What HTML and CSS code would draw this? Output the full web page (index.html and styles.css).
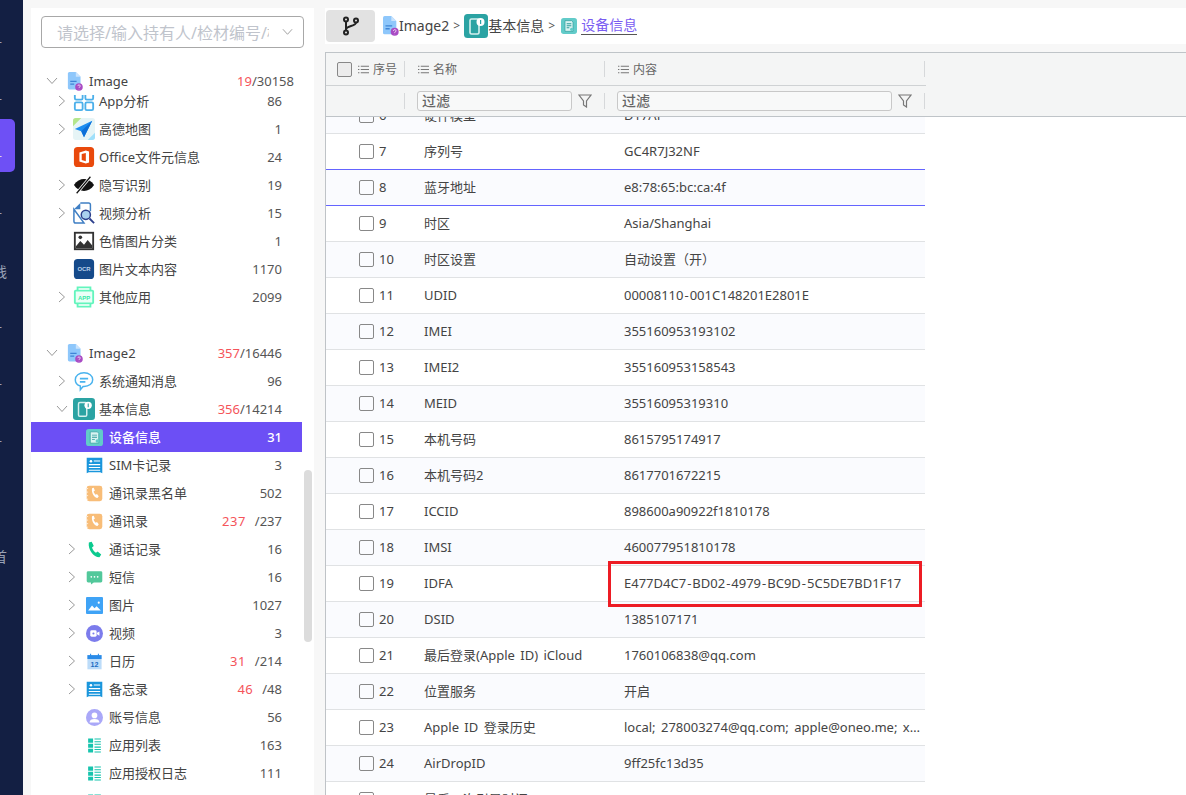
FILE: index.html
```html
<!DOCTYPE html>
<html lang="zh-CN">
<head>
  <meta charset="UTF-8">
  <title>设备信息</title>
  <link rel="stylesheet" href="styles.css">
</head>
<body>

  <!-- Icon set -->
  <svg class="icon-defs" width="0" height="0">
    <symbol id="i-doc" viewBox="0 0 20 24">
      <path d="M1 2a2 2 0 0 1 2-2h8l6 6v14a2 2 0 0 1-2 2H3a2 2 0 0 1-2-2z" fill="#8ec7fb"/>
      <path d="M11 0l6 6h-6z" fill="#c9e3fd"/>
      <path d="M4 11h8v1.6H4zM4 14.500h5v1.600H4z" fill="#3f85d6"/>
      <circle cx="15" cy="19" r="4.800" fill="#a94bc4"/>
      <path d="M13.600 17.800a1.500 1.500 0 1 1 2 1.400l-.6.5v.6M15 21.500v.3" fill="none" stroke="#fff" stroke-width=".9"/>
    </symbol>
    <symbol id="i-app" viewBox="0 0 24 24">
      <g fill="none" stroke="#4cb0ea" stroke-width="2">
        <rect x="2" y="2" width="8.500" height="8.500" rx="1.500"/>
        <rect x="13.500" y="2" width="8.500" height="8.500" rx="1.500"/>
        <rect x="2" y="13.500" width="8.500" height="8.500" rx="1.500"/>
        <rect x="13.500" y="13.500" width="8.500" height="8.500" rx="1.500"/>
      </g>
    </symbol>
    <symbol id="i-amap" viewBox="0 0 24 24">
      <rect width="24" height="24" rx="3" fill="#e6f4f6"/>
      <path d="M0 3a3 3 0 0 1 3-3h6L0 9z" fill="#b4e68c"/>
      <path d="M24 16v5a3 3 0 0 1-3 3h-5z" fill="#9fe0fb"/>
      <path d="M21 3L2 12l7 2.500L12 21z" fill="#1c8df0"/>
      <path d="M21 3L9 14.500 12 21z" fill="#0c6fd8"/>
    </symbol>
    <symbol id="i-office" viewBox="0 0 24 24">
      <rect x="1" y="1" width="22" height="22" rx="4" fill="#e9490c"/>
      <path d="M14 5l-7 2.200v9.600L14 19l3.500-1V6z" fill="#fff"/>
      <path d="M14 7.500l-4.500 1.200v6.600L14 16.500z" fill="#e9490c"/>
    </symbol>
    <symbol id="i-eye" viewBox="0 0 24 24">
      <path d="M1 12c3-4.500 7-6.500 11-6.500S20 7.500 23 12c-3 4.500-7 6.500-11 6.500S4 16.500 1 12z" fill="#111"/>
      <path d="M4 21L19 3" stroke="#fff" stroke-width="3"/>
      <path d="M4 21L19 3" stroke="#111" stroke-width="1.300"/>
    </symbol>
    <symbol id="i-video-file" viewBox="0 0 24 24">
      <path d="M8 1h9a2 2 0 0 1 2 2v7M12 23H3a2 2 0 0 1-2-2V8z" fill="none" stroke="#3f7fc4" stroke-width="1.600"/>
      <path d="M8 1L1 8h7z" fill="#3f7fc4"/>
      <circle cx="14" cy="14" r="5" fill="#a9d0ef" stroke="#2c3f8c" stroke-width="1.600"/>
      <path d="M18 18l5 5" stroke="#2c3f8c" stroke-width="2"/>
    </symbol>
    <symbol id="i-picture" viewBox="0 0 24 24">
      <rect x="2" y="3" width="20" height="18" fill="#fff" stroke="#333" stroke-width="2"/>
      <path d="M3 18l5-6 4 4 4-5 5 6v3H3z" fill="#333"/>
      <circle cx="8" cy="8" r="2" fill="#333"/>
    </symbol>
    <symbol id="i-ocr" viewBox="0 0 24 24">
      <rect x="1" y="1" width="22" height="22" rx="4" fill="#154a8a"/>
      <text x="12" y="14.500" text-anchor="middle" class="icon-text" fill="#b9d0ea">OCR</text>
    </symbol>
    <symbol id="i-otherapp" viewBox="0 0 24 24">
      <path d="M5 5V1.500h14V5M5 19v3.500h14V19" fill="none" stroke="#62f5bd" stroke-width="2"/>
      <rect x="2" y="5" width="20" height="14" rx="1" fill="#eafff7" stroke="#62f5bd" stroke-width="2"/>
      <text x="12" y="15" text-anchor="middle" class="icon-text" fill="#36e8a6">APP</text>
    </symbol>
    <symbol id="i-notice" viewBox="0 0 24 24">
      <path d="M12 3c5.500 0 9.500 3.300 9.500 7.500S17.500 18 12 18h-1l-3 3.500V17.500c-3.300-1-5.500-3.700-5.500-7C2.500 6.300 6.500 3 12 3z" fill="#fff" stroke="#49b3ee" stroke-width="1.600"/>
      <path d="M7.500 8.500h9v1.800h-9zM7.500 12h6v1.800h-6z" fill="#49b3ee"/>
    </symbol>
    <symbol id="i-basic" viewBox="0 0 24 24">
      <rect width="24" height="24" rx="3.500" fill="#2ba3a3"/>
      <rect x="6" y="5" width="9" height="15" rx="1.500" fill="none" stroke="#d5f0ee" stroke-width="1.600"/>
      <circle cx="16.500" cy="8" r="4" fill="#fff"/>
      <path d="M16 6h1.200v4H16z" fill="#2ba3a3"/>
    </symbol>
    <symbol id="i-device" viewBox="0 0 24 24">
      <rect width="24" height="24" rx="4" fill="#62cbc9"/>
      <path d="M6 4h10l2 2v14H6z" fill="#d8f3f2" stroke="#2f9c9c" stroke-width="1"/>
      <path d="M8.500 8h7v1.200h-7zM8.500 11h7v1.200h-7zM8.500 14h4v1.200h-4z" fill="#2f9c9c"/>
      <circle cx="16" cy="17" r="2.500" fill="#62cbc9"/>
    </symbol>
    <symbol id="i-sim" viewBox="0 0 24 24">
      <path d="M1 1h22v22l-3-1.500H4L1 23z" fill="#1a96dc"/>
      <circle cx="7" cy="6" r="1.800" fill="#fff"/>
      <path d="M11 5h9v1.500h-9zM4 10h16v1.500H4zM4 14h16v1.500H4zM4 18h16v1.500H4z" fill="#fff"/>
    </symbol>
    <symbol id="i-contact" viewBox="0 0 24 24">
      <rect x="1" y="1" width="22" height="22" rx="3.500" fill="#f8bd78"/>
      <path d="M1 5h2M1 10h2M1 15h2M1 20h2" stroke="#fff" stroke-width="1"/>
      <path d="M8.500 4.500l2.500-.5 1.500 4-1.800 1.200c.5 2 1.600 3.500 3 4.600l1.800-1 2.500 3.200-1.800 2.200c-4.800-.3-8.800-7-7.700-13.700z" fill="#fff"/>
    </symbol>
    <symbol id="i-phone" viewBox="0 0 24 24">
      <path d="M4 2l4-1 3 6-2.500 2c.8 3.200 2.800 5.800 5.500 7.500l2.500-1.800 5 4.500-2.500 3.800C10.500 23 2.500 12 4 2z" fill="#0cca8f"/>
    </symbol>
    <symbol id="i-sms" viewBox="0 0 24 24">
      <path d="M1 5a2 2 0 0 1 2-2h18a2 2 0 0 1 2 2v12a2 2 0 0 1-2 2H11l-4 3v-3H3a2 2 0 0 1-2-2z" fill="#52c89b"/>
      <circle cx="7.500" cy="11" r="1.200" fill="#fff"/>
      <circle cx="12" cy="11" r="1.200" fill="#fff"/>
      <circle cx="16.500" cy="11" r="1.200" fill="#fff"/>
    </symbol>
    <symbol id="i-photo" viewBox="0 0 24 24">
      <rect width="24" height="24" rx="1.500" fill="#3fa3f6"/>
      <path d="M3 19l5.500-7 3.500 4 3-3 6 6z" fill="#fff"/>
      <circle cx="18" cy="8" r="1.500" fill="#fff"/>
    </symbol>
    <symbol id="i-video" viewBox="0 0 24 24">
      <circle cx="12" cy="12" r="12" fill="#7c7cec"/>
      <rect x="6" y="7.500" width="9" height="9" rx="2" fill="#fff"/>
      <path d="M15.500 11l3.500-2v6l-3.500-2z" fill="#fff"/>
      <circle cx="10.500" cy="12" r="1.500" fill="#7c7cec"/>
    </symbol>
    <symbol id="i-calendar" viewBox="0 0 24 24">
      <rect x="2" y="3" width="20" height="20" fill="#bcdcf9"/>
      <rect x="2" y="3" width="20" height="5.500" fill="#2a8be8"/>
      <path d="M6.500 1v4M17.500 1v4" stroke="#2a8be8" stroke-width="1.500"/>
      <text x="12" y="20" text-anchor="middle" class="icon-day" fill="#1b6cc2">12</text>
    </symbol>
    <symbol id="i-user" viewBox="0 0 24 24">
      <circle cx="12" cy="12" r="12" fill="#aaa8f8"/>
      <circle cx="12" cy="9" r="4" fill="#fff"/>
      <path d="M5 19c0-3.500 3-5 7-5s7 1.500 7 5z" fill="#fff"/>
    </symbol>
    <symbol id="i-list" viewBox="0 0 24 24">
      <path d="M3 2h7v6H3zM3 9.500h7v5.500H3zM3 16.500h7V22H3z" fill="#17c4ad"/>
      <path d="M12 2h9v1.500h-9zM12 6h9v1.500h-9zM12 9.500h9V11h-9zM12 13.500h9V15h-9zM12 17h9v1.500h-9zM12 20.500h9V22h-9z" fill="#17c4ad"/>
    </symbol>
    <symbol id="i-lines" viewBox="0 0 12 12">
      <path d="M0 2h1.500v1H0zM3 2h9v1H3zM0 5.500h1.500v1H0zM3 5.500h9v1H3zM0 9h1.500v1H0zM3 9h9v1H3z" fill="#777"/>
    </symbol>
    <symbol id="i-filter" viewBox="0 0 14 14">
      <path d="M1 1h12L8.500 7v6l-3-2V7z" fill="none" stroke="#777" stroke-width="1.200"/>
    </symbol>
    <symbol id="i-right" viewBox="0 0 8 12">
      <path d="M1 1l5.500 5L1 11" fill="none" stroke="#999" stroke-width="1"/>
    </symbol>
    <symbol id="i-down" viewBox="0 0 12 8">
      <path d="M1 1l5 5.500L11 1" fill="none" stroke="#999" stroke-width="1"/>
    </symbol>
  </svg>

  <!-- Left rail, labels run off the edge of the window -->
  <nav class="rail">
    <div class="rail-item"><span>计</span></div>
    <div class="rail-item"><span>计</span></div>
    <div class="rail-item active"><span>计</span></div>
    <div class="rail-item"><span>计</span></div>
    <div class="rail-item far"><span>线</span></div>
    <div class="rail-item"><span>计</span></div>
    <div class="rail-item"><span>计</span></div>
    <div class="rail-item"><span>计</span></div>
    <div class="rail-item"></div>
    <div class="rail-item far"><span>首</span></div>
  </nav>

  <!-- Case tree -->
  <aside class="panel">
    <div class="owner-select">
      <span class="owner-text">请选择/输入持有人/检材编号/检材名称</span>
      <svg class="owner-arrow"><use href="#i-down"/></svg>
    </div>

    <div class="tree">
      <div class="row root sticky">
        <svg class="caret"><use href="#i-down"/></svg>
        <span class="icon-box"><svg class="ico-root"><use href="#i-doc"/></svg></span>
        <span class="label">Image</span>
        <span class="count"><b>19</b>/30158</span>
      </div>
      <div class="row l1">
        <svg class="caret"><use href="#i-right"/></svg>
        <span class="icon-box"><svg class="ico-lg"><use href="#i-app"/></svg></span>
        <span class="label">App分析</span><span class="count">86</span>
      </div>
      <div class="row l1">
        <svg class="caret"><use href="#i-right"/></svg>
        <span class="icon-box"><svg class="ico-lg"><use href="#i-amap"/></svg></span>
        <span class="label">高德地图</span><span class="count">1</span>
      </div>
      <div class="row l1">
        <span class="caret"></span>
        <span class="icon-box"><svg class="ico-lg"><use href="#i-office"/></svg></span>
        <span class="label">Office文件元信息</span><span class="count">24</span>
      </div>
      <div class="row l1">
        <svg class="caret"><use href="#i-right"/></svg>
        <span class="icon-box"><svg class="ico-lg"><use href="#i-eye"/></svg></span>
        <span class="label">隐写识别</span><span class="count">19</span>
      </div>
      <div class="row l1">
        <svg class="caret"><use href="#i-right"/></svg>
        <span class="icon-box"><svg class="ico-lg"><use href="#i-video-file"/></svg></span>
        <span class="label">视频分析</span><span class="count">15</span>
      </div>
      <div class="row l1">
        <span class="caret"></span>
        <span class="icon-box"><svg class="ico-lg"><use href="#i-picture"/></svg></span>
        <span class="label">色情图片分类</span><span class="count">1</span>
      </div>
      <div class="row l1">
        <span class="caret"></span>
        <span class="icon-box"><svg class="ico-lg"><use href="#i-ocr"/></svg></span>
        <span class="label">图片文本内容</span><span class="count">1170</span>
      </div>
      <div class="row l1">
        <svg class="caret"><use href="#i-right"/></svg>
        <span class="icon-box"><svg class="ico-lg"><use href="#i-otherapp"/></svg></span>
        <span class="label">其他应用</span><span class="count">2099</span>
      </div>

      <div class="row root second">
        <svg class="caret"><use href="#i-down"/></svg>
        <span class="icon-box"><svg class="ico-root"><use href="#i-doc"/></svg></span>
        <span class="label">Image2</span>
        <span class="count"><b>357</b>/16446</span>
      </div>
      <div class="row l1">
        <svg class="caret"><use href="#i-right"/></svg>
        <span class="icon-box"><svg class="ico-lg"><use href="#i-notice"/></svg></span>
        <span class="label">系统通知消息</span><span class="count">96</span>
      </div>
      <div class="row l1">
        <svg class="caret"><use href="#i-down"/></svg>
        <span class="icon-box"><svg class="ico-lg"><use href="#i-basic"/></svg></span>
        <span class="label">基本信息</span>
        <span class="count"><b>356</b>/14214</span>
      </div>
      <div class="row l2 active">
        <span class="caret"></span>
        <span class="icon-box"><svg class="ico-sm"><use href="#i-device"/></svg></span>
        <span class="label">设备信息</span><span class="count">31</span>
      </div>
      <div class="row l2">
        <span class="caret"></span>
        <span class="icon-box"><svg class="ico-sm"><use href="#i-sim"/></svg></span>
        <span class="label">SIM卡记录</span><span class="count">3</span>
      </div>
      <div class="row l2">
        <span class="caret"></span>
        <span class="icon-box"><svg class="ico-sm"><use href="#i-contact"/></svg></span>
        <span class="label">通讯录黑名单</span><span class="count">502</span>
      </div>
      <div class="row l2">
        <span class="caret"></span>
        <span class="icon-box"><svg class="ico-sm"><use href="#i-contact"/></svg></span>
        <span class="label">通讯录</span>
        <span class="count"><b class="gap">237</b>/237</span>
      </div>
      <div class="row l2">
        <svg class="caret"><use href="#i-right"/></svg>
        <span class="icon-box"><svg class="ico-sm"><use href="#i-phone"/></svg></span>
        <span class="label">通话记录</span><span class="count">16</span>
      </div>
      <div class="row l2">
        <svg class="caret"><use href="#i-right"/></svg>
        <span class="icon-box"><svg class="ico-sm"><use href="#i-sms"/></svg></span>
        <span class="label">短信</span><span class="count">16</span>
      </div>
      <div class="row l2">
        <svg class="caret"><use href="#i-right"/></svg>
        <span class="icon-box"><svg class="ico-sm"><use href="#i-photo"/></svg></span>
        <span class="label">图片</span><span class="count">1027</span>
      </div>
      <div class="row l2">
        <svg class="caret"><use href="#i-right"/></svg>
        <span class="icon-box"><svg class="ico-sm"><use href="#i-video"/></svg></span>
        <span class="label">视频</span><span class="count">3</span>
      </div>
      <div class="row l2">
        <svg class="caret"><use href="#i-right"/></svg>
        <span class="icon-box"><svg class="ico-sm"><use href="#i-calendar"/></svg></span>
        <span class="label">日历</span>
        <span class="count"><b class="gap">31</b>/214</span>
      </div>
      <div class="row l2">
        <svg class="caret"><use href="#i-right"/></svg>
        <span class="icon-box"><svg class="ico-sm"><use href="#i-sim"/></svg></span>
        <span class="label">备忘录</span>
        <span class="count"><b class="gap">46</b>/48</span>
      </div>
      <div class="row l2">
        <span class="caret"></span>
        <span class="icon-box"><svg class="ico-sm"><use href="#i-user"/></svg></span>
        <span class="label">账号信息</span><span class="count">56</span>
      </div>
      <div class="row l2">
        <span class="caret"></span>
        <span class="icon-box"><svg class="ico-sm"><use href="#i-list"/></svg></span>
        <span class="label">应用列表</span><span class="count">163</span>
      </div>
      <div class="row l2">
        <span class="caret"></span>
        <span class="icon-box"><svg class="ico-sm"><use href="#i-list"/></svg></span>
        <span class="label">应用授权日志</span><span class="count">111</span>
      </div>
      <div class="row l2">
        <span class="caret"></span>
        <span class="icon-box"><svg class="ico-sm"><use href="#i-list"/></svg></span>
        <span class="label">应用程序使用记录</span><span class="count">44</span>
      </div>
    </div>

    <div class="thumb"></div>
  </aside>

  <!-- Main content -->
  <main class="main">
    <div class="crumbs">
      <button class="branch-btn">
        <svg width="18" height="20" viewBox="0 0 18 20">
          <g fill="none" stroke="#222" stroke-width="2">
            <circle cx="4" cy="3.500" r="2"/>
            <circle cx="4" cy="16.500" r="2"/>
            <circle cx="14" cy="4.500" r="2"/>
            <path d="M4 5.500v9M14 6.500c0 4-10 3-10 7"/>
          </g>
        </svg>
      </button>
      <svg class="crumb-doc"><use href="#i-doc"/></svg>
      <span class="crumb">Image2</span>
      <span class="crumb-sep">&gt;</span>
      <svg class="crumb-basic"><use href="#i-basic"/></svg>
      <span class="crumb">基本信息</span>
      <span class="crumb-sep">&gt;</span>
      <svg class="crumb-device"><use href="#i-device"/></svg>
      <span class="crumb current">设备信息</span>
    </div>

    <div class="grid-wrap">
      <div class="grid-head">
        <div class="head-row">
          <div class="head-cell first">
            <span class="check head-check"></span>
            <svg class="lines"><use href="#i-lines"/></svg><span>序号</span>
          </div>
          <div class="head-cell"><svg class="lines"><use href="#i-lines"/></svg><span>名称</span></div>
          <div class="head-cell"><svg class="lines"><use href="#i-lines"/></svg><span>内容</span></div>
        </div>
        <div class="filter-row">
          <div class="filter-cell"></div>
          <div class="filter-cell">
            <span class="filter-input">过滤</span>
            <svg class="filter-icon"><use href="#i-filter"/></svg>
          </div>
          <div class="filter-cell">
            <span class="filter-input">过滤</span>
            <svg class="filter-icon"><use href="#i-filter"/></svg>
          </div>
        </div>
      </div>

      <div class="grid-body">
        <div class="grid-rows">
          <div class="grid-row"><div class="no"><span class="check"></span>6</div><div class="cell">硬件模型</div><div class="cell">D17AP</div></div>
          <div class="grid-row"><div class="no"><span class="check"></span>7</div><div class="cell">序列号</div><div class="cell">GC4R7J32NF</div></div>
          <div class="grid-row hover"><div class="no"><span class="check"></span>8</div><div class="cell">蓝牙地址</div><div class="cell">e8:78:65:bc:ca:4f</div></div>
          <div class="grid-row"><div class="no"><span class="check"></span>9</div><div class="cell">时区</div><div class="cell">Asia/Shanghai</div></div>
          <div class="grid-row"><div class="no"><span class="check"></span>10</div><div class="cell">时区设置</div><div class="cell">自动设置（开）</div></div>
          <div class="grid-row"><div class="no"><span class="check"></span>11</div><div class="cell">UDID</div><div class="cell">00008110<span class="dash">-</span>001C148201E2801E</div></div>
          <div class="grid-row"><div class="no"><span class="check"></span>12</div><div class="cell">IMEI</div><div class="cell">355160953193102</div></div>
          <div class="grid-row"><div class="no"><span class="check"></span>13</div><div class="cell">IMEI2</div><div class="cell">355160953158543</div></div>
          <div class="grid-row"><div class="no"><span class="check"></span>14</div><div class="cell">MEID</div><div class="cell">35516095319310</div></div>
          <div class="grid-row"><div class="no"><span class="check"></span>15</div><div class="cell">本机号码</div><div class="cell">8615795174917</div></div>
          <div class="grid-row"><div class="no"><span class="check"></span>16</div><div class="cell">本机号码2</div><div class="cell">8617701672215</div></div>
          <div class="grid-row"><div class="no"><span class="check"></span>17</div><div class="cell">ICCID</div><div class="cell">898600a90922f1810178</div></div>
          <div class="grid-row"><div class="no"><span class="check"></span>18</div><div class="cell">IMSI</div><div class="cell">460077951810178</div></div>
          <div class="grid-row"><div class="no"><span class="check"></span>19</div><div class="cell">IDFA</div><div class="cell">E477D4C7<span class="dash">-</span>BD02<span class="dash">-</span>4979<span class="dash">-</span>BC9D<span class="dash">-</span>5C5DE7BD1F17</div></div>
          <div class="grid-row"><div class="no"><span class="check"></span>20</div><div class="cell">DSID</div><div class="cell">1385107171</div></div>
          <div class="grid-row"><div class="no"><span class="check"></span>21</div><div class="cell">最后登录(Apple ID) iCloud</div><div class="cell">1760106838@qq.com</div></div>
          <div class="grid-row"><div class="no"><span class="check"></span>22</div><div class="cell">位置服务</div><div class="cell">开启</div></div>
          <div class="grid-row"><div class="no"><span class="check"></span>23</div><div class="cell">Apple ID 登录历史</div><div class="cell">local; 278003274@qq.com; apple@oneo.me; x@oneo.me</div></div>
          <div class="grid-row"><div class="no"><span class="check"></span>24</div><div class="cell">AirDropID</div><div class="cell">9ff25fc13d35</div></div>
          <div class="grid-row"><div class="no"><span class="check"></span>25</div><div class="cell">最后一次引导时间</div><div class="cell">2025-04-10 13:36:00 +0800</div></div>
        </div>
      </div>
    </div>
  </main>

  <!-- Red annotation box -->
  <div class="mark"></div>

</body>
</html>
```

FILE: styles.css
```css
* {
  margin: 0;
  padding: 0;
  box-sizing: border-box;
}
body {
  font-family: "Noto Sans", "Noto Sans CJK SC", sans-serif;
  font-size: 13px;
  color: #444;
  background-color: #f7f7f7;
  display: flex;
  height: 795px;
  overflow: hidden;
}
.icon-defs {
  position: absolute;
}
.icon-text {
  font-family: "Liberation Sans", sans-serif;
  font-size: 6.500px;
  font-weight: bold;
}
.icon-day {
  font-family: "Liberation Sans", sans-serif;
  font-size: 10px;
  font-weight: bold;
}

/* Rail */
.rail {
  width: 23px;
  flex-shrink: 0;
  background-color: #131f43;
  padding-top: 5px;
  overflow: hidden;
}
.rail-item {
  width: 15px;
  height: 53px;
  margin-bottom: 4px;
  padding: 31px 13px 0 0;
  border-radius: 0 5px 5px 0;
  display: flex;
  justify-content: flex-end;
  color: #98a1b5;
  font-size: 14px;
  line-height: 16px;
  white-space: nowrap;
}
.rail-item.far {
  padding-right: 8px;
}
.rail-item.active {
  background-color: #6e50f5;
  color: #ddd;
}

/* Tree panel */
.panel {
  position: relative;
  width: 283px;
  margin: 8px 0 0 8px;
  background-color: white;
  flex-shrink: 0;
  overflow: hidden;
}
.owner-select {
  width: 263px;
  height: 32px;
  margin: 8px 0 0 10px;
  padding-left: 15px;
  border: 1px solid #a8a8a8;
  border-radius: 4px;
  display: flex;
  align-items: center;
  color: #c0c4cc;
  font-size: 16px;
}
.owner-text {
  width: 212px;
  overflow: hidden;
  white-space: nowrap;
}
.owner-arrow {
  width: 11px;
  height: 8px;
  margin-left: 13px;
}
.tree {
  width: 271px;
  margin-top: 19px;
}
.row {
  height: 28px;
  display: flex;
  align-items: center;
  padding-right: 20px;
}
.caret {
  width: 12px;
  height: 12px;
  flex-shrink: 0;
}
.icon-box {
  width: 24px;
  margin-left: 4px;
  display: flex;
  justify-content: center;
  flex-shrink: 0;
}
.label {
  margin: 0 0 2px 3px;
  white-space: nowrap;
}
.count {
  margin-left: auto;
  color: #555;
  white-space: nowrap;
}
.count b {
  font-weight: normal;
  color: #f5545a;
}
.count b.gap {
  letter-spacing: 0.5px;
  margin-right: 9px;
}
.root {
  padding-left: 15px;
}
.root .icon-box {
  margin-left: 5px;
}
.root .label {
  margin: 0 0 0 2px;
}
.sticky {
  position: relative;
  z-index: 1;
  margin-bottom: -8px;
  padding-right: 8px;
  background-color: white;
}
.second {
  margin-top: 28px;
}
.l1 {
  padding-left: 25px;
}
.l2 {
  padding-left: 35px;
}
.ico-root {
  width: 16px;
  height: 19px;
}
.ico-lg {
  width: 22px;
  height: 22px;
}
.ico-sm {
  width: 17px;
  height: 17px;
}
.row.active {
  height: 30px;
  margin: -1px 0;
  background-color: #6c4ff5;
  color: white;
  font-weight: 500;
}
.row.active .count {
  color: white;
}
.thumb {
  position: absolute;
  left: 273px;
  top: 462px;
  width: 8px;
  height: 172px;
  background-color: #dcdcdc;
  border-radius: 4px;
}

/* Main */
.main {
  flex: 1;
  margin: 8px 0 0 11px;
  min-width: 0;
}
.crumbs {
  height: 36px;
  background-color: white;
  display: flex;
  align-items: center;
  padding-left: 1px;
  font-size: 14px;
  color: #444;
}
.branch-btn {
  width: 49px;
  height: 32px;
  margin-right: 7px;
  background-color: #e2e2e2;
  border: none;
  border-radius: 4px;
  display: flex;
  align-items: center;
  justify-content: center;
}
.crumb {
  margin-bottom: 2px;
}
.crumb-doc {
  width: 17px;
  height: 20px;
}
.crumb-basic {
  width: 24px;
  height: 24px;
  margin: 0 0 0 5px;
}
.crumb-device {
  width: 16px;
  height: 16px;
  margin: 0 4px 0 7px;
}
.crumb-sep {
  width: 6px;
  margin: 0 0 2px 4px;
  font-size: 12px;
  color: #555;
}
.current {
  color: #7a5cf2;
  border-bottom: 1px solid #555;
  line-height: 19px;
}
.grid-wrap {
  margin-top: 8px;
  background-color: white;
  border-left: 1px solid #bfc3c7;
  height: 743px;
  overflow: hidden;
}
.grid-head {
  background-color: #f4f5f5;
  border-top: 1px solid #bfc4c8;
  border-bottom: 1px solid #bfc4c8;
}
.head-row, .filter-row {
  width: 600px;
  display: grid;
  grid-template-columns: 79px 200px 320px;
  align-items: center;
}
.head-row {
  height: 33px;
  border-bottom: 1px solid #cfd2d4;
  color: #666;
  font-size: 12px;
}
.filter-row {
  height: 30px;
}
.head-cell, .filter-cell {
  height: 16px;
  padding-left: 13px;
  border-right: 1px solid #d6d8da;
  display: flex;
  align-items: center;
}
.head-cell.first {
  padding-left: 11px;
}
.lines {
  width: 11px;
  height: 11px;
  margin-right: 4px;
}
.head-check {
  background-color: #ececec;
  margin-right: 6px;
}
.filter-cell {
  padding-left: 12px;
}
.filter-input {
  flex: 1;
  height: 20px;
  padding-left: 4px;
  background-color: #f8f9f9;
  border: 1px solid #c8c8c8;
  border-radius: 3px;
  color: #666;
  font-size: 14px;
  font-weight: 500;
  line-height: 18px;
}
.filter-icon {
  width: 14px;
  height: 14px;
  margin: 0 12px 0 6px;
}
.check {
  width: 15px;
  height: 15px;
  flex-shrink: 0;
  border: 1.500px solid #888;
  border-radius: 2px;
}
.grid-body {
  height: 680px;
  overflow: hidden;
}
.grid-rows {
  width: 599px;
  margin-top: -19px;
}
.grid-row {
  height: 36px;
  display: grid;
  grid-template-columns: 78px 200px 321px;
  align-items: center;
  border-bottom: 1px solid #e0e2e4;
}
.grid-row:nth-child(odd) {
  background-color: #fafbfe;
}
.grid-row.hover {
  position: relative;
  border-bottom: 1px solid #6464ff;
  box-shadow: 0 -1px 0 #6464ff;
}
.no {
  padding: 0 0 2px 33px;
  display: flex;
  align-items: center;
  gap: 5px;
}
.check {
  margin-top: 2px;
}
.head-check {
  margin-top: 0;
}
.cell {
  padding: 0 2px 2px 20px;
  overflow: hidden;
  white-space: nowrap;
  text-overflow: ellipsis;
  word-spacing: 2px;
}
.dash {
  padding: 0 1px;
}

/* Red box drawn over the screenshot */
.mark {
  position: absolute;
  left: 608px;
  top: 561px;
  width: 314px;
  height: 46px;
  border: 3px solid #ed1c24;
}
```
